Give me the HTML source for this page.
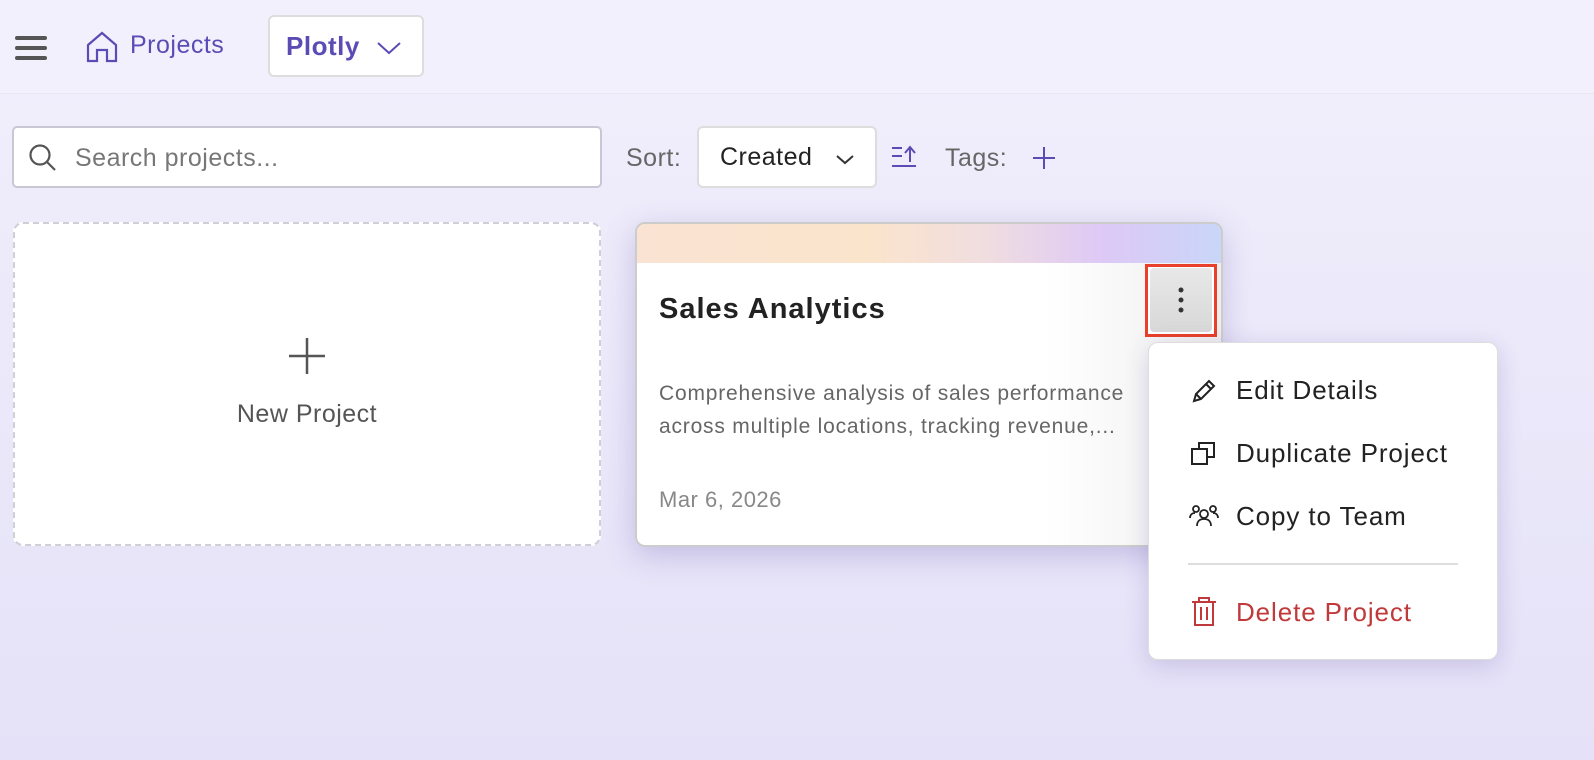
<!DOCTYPE html>
<html><head><meta charset="utf-8"><style>
*{box-sizing:border-box;margin:0;padding:0}
body{width:1594px;height:760px;overflow:hidden;font-family:"Liberation Sans",sans-serif;background:linear-gradient(180deg,#f2f0fc 0%,#eceafa 40%,#e5e1f8 100%);position:relative;letter-spacing:0.5px}
.a{position:absolute;white-space:nowrap}
.hdr{left:0;top:0;width:1594px;height:94px;border-bottom:1px solid #e8e6f0;background:#f2f0fc}
</style></head><body>
<div class="a hdr"></div>
<svg class="a" style="left:14px;top:34px" width="34" height="28"><g stroke="#555" stroke-width="4" stroke-linecap="round"><line x1="3" y1="4" x2="31" y2="4"/><line x1="3" y1="14" x2="31" y2="14"/><line x1="3" y1="24" x2="31" y2="24"/></g></svg>
<svg class="a" style="left:86px;top:31px" width="32" height="32" fill="none" stroke="#5b4cb5" stroke-width="2.2"><path d="M2 14 L16 2 L30 14 V30 H21 V19 H11 V30 H2 Z"/></svg>
<div class="a" style="left:130px;top:31px;font-size:25px;color:#5b4cb5">Projects</div>
<div class="a" style="left:268px;top:15px;width:156px;height:62px;background:#fff;border:2px solid #ddd;border-radius:6px"></div>
<div class="a" style="left:286px;top:31px;font-size:26px;color:#5b4cb5;font-weight:bold">Plotly</div>
<svg class="a" style="left:376px;top:40px" width="28" height="16" fill="none" stroke="#5b4cb5" stroke-width="2"><path d="M2 3 L13 13 L24 3"/></svg>

<div class="a" style="left:12px;top:126px;width:590px;height:62px;background:#fff;border:2px solid #c9c7d3;border-radius:5px"></div>
<svg class="a" style="left:28px;top:143px" width="30" height="30" fill="none" stroke="#555" stroke-width="2.2"><circle cx="12" cy="12" r="9.5"/><line x1="19" y1="19" x2="27" y2="27"/></svg>
<div class="a" style="left:75px;top:144px;font-size:25px;color:#777">Search projects...</div>
<div class="a" style="left:626px;top:144px;font-size:25px;color:#666">Sort:</div>
<div class="a" style="left:697px;top:126px;width:180px;height:62px;background:#fff;border:2px solid #ddd;border-radius:6px"></div>
<div class="a" style="left:720px;top:143px;font-size:25px;color:#222">Created</div>
<svg class="a" style="left:834px;top:153px" width="22" height="14" fill="none" stroke="#333" stroke-width="2"><path d="M3 3 L11 10 L19 3"/></svg>
<svg class="a" style="left:890px;top:144px" width="30" height="28" fill="none" stroke="#5b4cb5" stroke-width="2"><path d="M2 4H12M2 12H12M2 22H26M20 18V4M15 9L20 3L25 9"/></svg>
<div class="a" style="left:945px;top:144px;font-size:25px;color:#666">Tags:</div>
<svg class="a" style="left:1032px;top:146px" width="24" height="24" stroke="#5b4cb5" stroke-width="2"><line x1="12" y1="1" x2="12" y2="23"/><line x1="1" y1="12" x2="23" y2="12"/></svg>

<div class="a" style="left:13px;top:222px;width:588px;height:324px;background:#fff;border:2px dashed #d0ced8;border-radius:10px"></div>
<svg class="a" style="left:288px;top:337px" width="38" height="38" stroke="#555" stroke-width="2.5"><line x1="19" y1="1" x2="19" y2="37"/><line x1="1" y1="19" x2="37" y2="19"/></svg>
<div class="a" style="left:0;width:614px;text-align:center;top:400px;font-size:25px;color:#555">New Project</div>

<div class="a" style="left:635px;top:222px;width:588px;height:325px;border:2px solid #ccc;border-radius:10px;overflow:hidden;background:linear-gradient(90deg,#fff 70%,#eee 100%);box-shadow:0 8px 30px rgba(80,60,160,.25)">
<div style="height:39px;background:linear-gradient(90deg,#fae3d2 0%,#fbe4cc 40%,#f0dde0 60%,#ddc9f6 80%,#c9d6f8 100%)"></div>
</div>
<div class="a" style="left:659px;top:293px;font-size:29px;font-weight:bold;color:#222;letter-spacing:1px">Sales Analytics</div>
<div class="a" style="left:659px;top:377px;font-size:21px;color:#666;line-height:33px;width:490px;overflow:hidden;letter-spacing:0.8px">Comprehensive analysis of sales performance<br>across multiple locations, tracking revenue,...</div>
<div class="a" style="left:659px;top:487px;font-size:22px;color:#888">Mar 6, 2026</div>
<div class="a" style="left:1145px;top:264px;width:72px;height:73px;border:3px solid #e8402a;background:#fff"></div>
<div class="a" style="left:1150px;top:268px;width:62px;height:64px;background:linear-gradient(#e8e8e8,#d8d8d8);border-radius:4px"></div>
<svg class="a" style="left:1175px;top:286px" width="12" height="30" fill="#333"><circle cx="6" cy="4" r="2.5"/><circle cx="6" cy="14" r="2.5"/><circle cx="6" cy="24" r="2.5"/></svg>

<div class="a" style="left:1148px;top:342px;width:350px;height:318px;background:#fff;border:1px solid #ddd;border-radius:10px;box-shadow:0 6px 24px rgba(60,40,140,.18)"></div>
<svg class="a" style="left:1190px;top:377px" width="28" height="28" fill="none" stroke="#222" stroke-width="2"><path d="M4 24L6 17L19 4L24 9L11 22Z M16 7L21 12 M6 17L11 22"/></svg>
<div class="a" style="left:1236px;top:375px;font-size:26px;color:#222;letter-spacing:0.9px">Edit Details</div>
<svg class="a" style="left:1190px;top:440px" width="28" height="28" fill="none" stroke="#222" stroke-width="2"><rect x="2" y="9" width="15" height="15"/><path d="M9 9V3H24V17H17"/></svg>
<div class="a" style="left:1236px;top:438px;font-size:26px;color:#222;letter-spacing:0.9px">Duplicate Project</div>
<svg class="a" style="left:1188px;top:503px" width="32" height="26" fill="none" stroke="#222" stroke-width="1.8"><circle cx="16" cy="11" r="4"/><path d="M9 23C9 18 12 16 16 16S23 18 23 23"/><circle cx="8" cy="6" r="3"/><path d="M2 15C2 12 4 10 7 10"/><circle cx="25" cy="6" r="3"/><path d="M30 15C30 12 28 10 25 10"/></svg>
<div class="a" style="left:1236px;top:501px;font-size:26px;color:#222;letter-spacing:0.9px">Copy to Team</div>
<div class="a" style="left:1188px;top:563px;width:270px;height:2px;background:#ddd"></div>
<svg class="a" style="left:1190px;top:596px" width="28" height="32" fill="none" stroke="#c0393b" stroke-width="2"><path d="M2 6H26M9 6V2H19V6M5 6V29H23V6M11 11V24M17 11V24"/></svg>
<div class="a" style="left:1236px;top:597px;font-size:26px;color:#c0393b;letter-spacing:0.9px">Delete Project</div>
</body></html>
